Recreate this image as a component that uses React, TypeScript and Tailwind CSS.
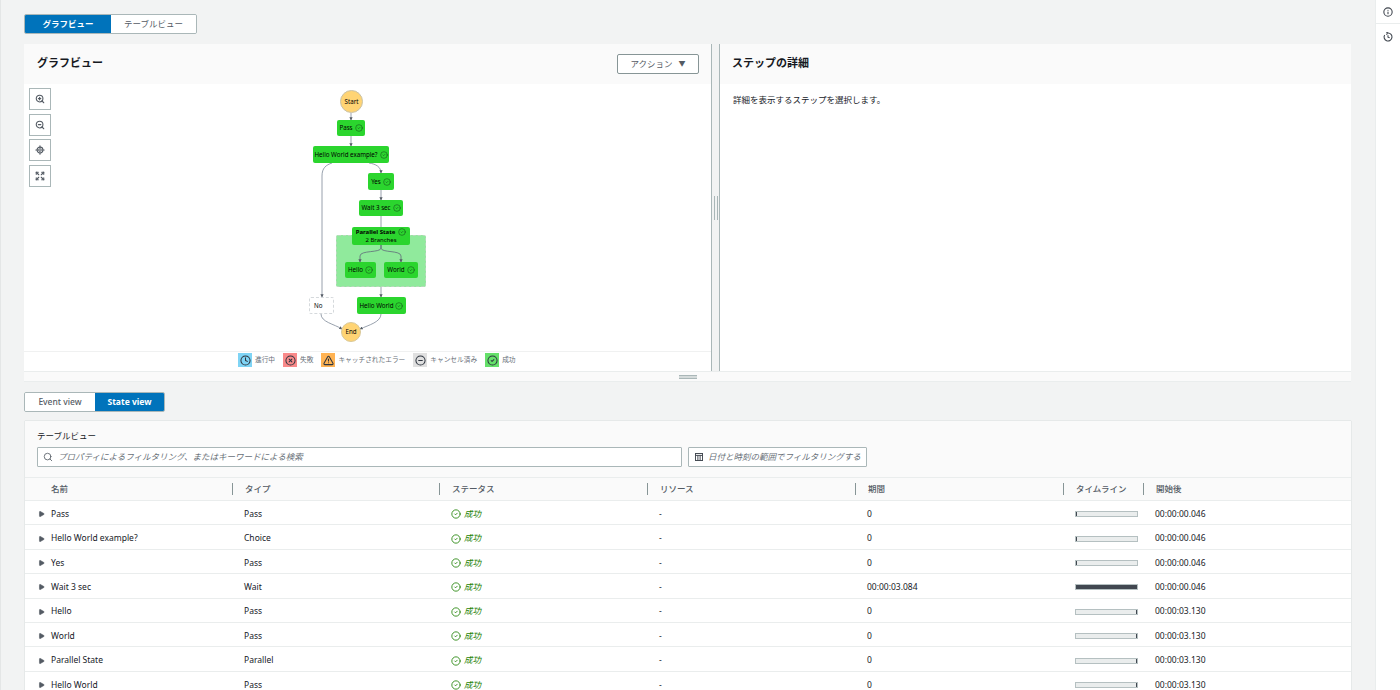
import { CircleCheck, CircleMinus, CircleX, Clock, Expand, Info, LocateFixed, Play, Search, TriangleAlert, ZoomIn, ZoomOut } from 'lucide-react'

const graphNodes = [
  { label: 'Pass', cls: 'left-[313px] top-[36px] w-[28px] h-[16px]' },
  { label: 'Hello World example?', cls: 'left-[289px] top-[62px] w-[76px] h-[17px]' },
  { label: 'Yes', cls: 'left-[344px] top-[89px] w-[26px] h-[17px]' },
  { label: 'Wait 3 sec', cls: 'left-[335px] top-[116px] w-[44px] h-[16px]' },
  { label: 'Hello', cls: 'left-[321px] top-[178px] w-[31px] h-[16px]' },
  { label: 'World', cls: 'left-[360px] top-[178px] w-[34px] h-[16px]' },
  { label: 'Hello World', cls: 'left-[333px] top-[213px] w-[49px] h-[17px]' },
]

const legend = [
  { label: '進行中', icon: Clock, cls: 'bg-[#7fd4f5]' },
  { label: '失敗', icon: CircleX, cls: 'bg-[#f98a8a]' },
  { label: 'キャッチされたエラー', icon: TriangleAlert, cls: 'bg-[#ffb353]' },
  { label: 'キャンセル済み', icon: CircleMinus, cls: 'bg-[#e0e0e0]' },
  { label: '成功', icon: CircleCheck, cls: 'bg-[#65e06a]' },
]

const rows = [
  { name: 'Pass', type: 'Pass', duration: '0', bar: 'start', after: '00:00:00.046' },
  { name: 'Hello World example?', type: 'Choice', duration: '0', bar: 'start', after: '00:00:00.046' },
  { name: 'Yes', type: 'Pass', duration: '0', bar: 'start', after: '00:00:00.046' },
  { name: 'Wait 3 sec', type: 'Wait', duration: '00:00:03.084', bar: 'full', after: '00:00:00.046' },
  { name: 'Hello', type: 'Pass', duration: '0', bar: 'end', after: '00:00:03.130' },
  { name: 'World', type: 'Pass', duration: '0', bar: 'end', after: '00:00:03.130' },
  { name: 'Parallel State', type: 'Parallel', duration: '0', bar: 'end', after: '00:00:03.130' },
  { name: 'Hello World', type: 'Pass', duration: '0', bar: 'end', after: '00:00:03.130' },
]

const columns = ['名前', 'タイプ', 'ステータス', 'リソース', '期間', 'タイムライン', '開始後']
const gridCols = 'grid grid-cols-[207px_207px_208px_208px_208px_80px_208px]'

function GraphEdges() {
  return (
    <svg className="absolute inset-0 h-full w-full" fill="none" stroke="#7d8998" strokeWidth="0.8">
      <defs>
        <marker id="arrow" markerWidth="4" markerHeight="4" refX="3.4" refY="2" orient="auto">
          <path d="M0 0 L4 2 L0 4 Z" fill="#545b64" stroke="none" />
        </marker>
      </defs>
      <path d="M327 29 V36" markerEnd="url(#arrow)" />
      <path d="M327 52 V62" markerEnd="url(#arrow)" />
      <path d="M308 79 C 302 81 298 84 298 92 V213" markerEnd="url(#arrow)" />
      <path d="M345 79 C 352 80 357 83 357 89" markerEnd="url(#arrow)" />
      <path d="M357 106 V116" markerEnd="url(#arrow)" />
      <path d="M357 132 V143" />
      <path d="M357 161 V164 C 357 169 336 166 336 172 V178" stroke="#5f6b7a" markerEnd="url(#arrow)" />
      <path d="M357 161 V164 C 357 169 377 166 377 172 V178" stroke="#5f6b7a" markerEnd="url(#arrow)" />
      <path d="M357 203 V213" markerEnd="url(#arrow)" />
      <path d="M297 230 C 297 238 310 240 318 245" markerEnd="url(#arrow)" />
      <path d="M357 230 C 357 238 345 241 336 245" markerEnd="url(#arrow)" />
    </svg>
  )
}

function GraphCanvas() {
  return (
    <div className="relative flex-1 bg-white">
      {[ZoomIn, ZoomOut, LocateFixed, Expand].map((Icon, i) => (
        <button
          key={i}
          className={`absolute left-[5px] flex h-[22px] w-[22px] items-center justify-center border border-[#aab7b8] bg-white ${
            ['top-[4px]', 'top-[30px]', 'top-[55px]', 'top-[81px]'][i]
          }`}
        >
          <Icon className="h-[10px] w-[10px] text-[#545b64]" strokeWidth={2.6} />
        </button>
      ))}

      <div className="absolute left-[312px] top-[151px] h-[52px] w-[90px] rounded-[2px] border border-dashed border-[#b9d8bd] bg-[#90ea9c]" />
      <GraphEdges />

      <div className="absolute left-[316px] top-[6px] flex h-[23px] w-[23px] items-center justify-center rounded-full border border-[#c9c2a8] bg-[#ffd474] text-[6.2px] text-black">Start</div>
      <div className="absolute left-[317px] top-[238px] flex h-[20px] w-[20px] items-center justify-center rounded-full border border-[#d8c89a] bg-[#ffd474] text-[6.2px] text-black">End</div>

      {graphNodes.map((n) => (
        <div
          key={n.label}
          className={`absolute flex items-center justify-center gap-[2px] whitespace-nowrap rounded-[2px] bg-[#2bd52e] text-[6.2px] text-black ${n.cls}`}
        >
          {n.label}
          <CircleCheck className="h-[8px] w-[8px] shrink-0 text-[#14401a]" strokeWidth={1.5} />
        </div>
      ))}

      <div className="absolute left-[328px] top-[143px] flex h-[18px] w-[58px] flex-col items-center justify-center rounded-[2px] bg-[#2bd52e] text-[6px] leading-[8px] text-black">
        <div className="flex items-center gap-[3px] whitespace-nowrap font-bold">
          Parallel State
          <CircleCheck className="h-[8px] w-[8px] text-[#14401a]" strokeWidth={1.5} />
        </div>
        <div className="whitespace-nowrap">2 Branches</div>
      </div>

      <div className="absolute left-[285px] top-[213px] flex h-[17px] w-[25px] items-center rounded-[2px] border border-dashed border-[#d5d9dc] bg-white pl-[4px] text-[6.2px] text-black">No</div>
    </div>
  )
}

function Legend() {
  return (
    <div className="flex h-[20px] shrink-0 items-start gap-[8px] border-t border-[#f0f1f1] bg-white pl-[214px] pt-px text-[6.7px] text-[#687078]">
      {legend.map(({ label, icon: Icon, cls }) => (
        <div key={label} className="flex items-center gap-[3px]">
          <span className={`flex h-[14px] w-[14px] items-center justify-center ${cls}`}>
            <Icon className="h-[11px] w-[11px] text-[#2f3640]" strokeWidth={2.2} />
          </span>
          {label}
        </div>
      ))}
    </div>
  )
}

function TimelineBar({ kind }: { kind: string }) {
  return (
    <div
      className={`flex h-[6px] w-[63px] border border-[#b5c0c1] bg-[#eaeded] ${
        kind === 'end' ? 'justify-end' : 'justify-start'
      }`}
    >
      <div className={kind === 'full' ? 'w-full bg-[#414750]' : 'w-px bg-[#414750]'} />
    </div>
  )
}

function DateIcon() {
  return (
    <svg viewBox="0 0 10 10" className="h-[8px] w-[8px] shrink-0" fill="none" stroke="#414750" strokeWidth="1.2">
      <rect x="0.6" y="0.6" width="8.8" height="8.8" />
      <path d="M0.6 3 H9.4 M3.6 3 V9.4 M6.4 3 V9.4" />
    </svg>
  )
}

function StateTable() {
  return (
    <div className="ml-px mt-[9px] min-h-0 flex-1 overflow-hidden bg-white shadow-[0_0_1px_#aab7b8]">
      <div className="bg-[#fafafa] px-3 pt-[9px]">
        <div className="text-[8.5px] leading-[12px] text-[#16191f]">テーブルビュー</div>
        <div className="mt-[5px] flex h-[20px] gap-[6px]">
          <div className="flex w-[645px] items-center gap-[5px] rounded-[1px] border border-[#aab7b8] bg-white pl-[5px]">
            <Search className="h-[10px] w-[10px] text-[#545b64]" />
            <input
              readOnly
              placeholder="プロパティによるフィルタリング、またはキーワードによる検索"
              className="flex-1 bg-transparent text-[8.5px] italic outline-none placeholder:text-[#687078]"
            />
          </div>
          <button className="flex w-[179px] items-center gap-[5px] rounded-[1px] border border-[#aab7b8] bg-white pl-[6px] text-[8.5px] italic text-[#687078]">
            <DateIcon />
            日付と時刻の範囲でフィルタリングする
          </button>
        </div>
        <div className="h-[10px]" />
      </div>

      <div className={`${gridCols} h-[24px] items-center border-y border-[#eaeded] bg-[#fafafa] text-[8.5px] font-medium text-[#545b64]`}>
        {columns.map((c, i) => (
          <div key={c} className={i === 0 ? 'pl-[26px]' : 'border-l border-[#879596] pl-3 leading-[12px]'}>
            {c}
          </div>
        ))}
      </div>

      {rows.map((r) => (
        <div key={r.name} className={`${gridCols} h-[24.4px] items-center border-b border-[#eaeded] pt-[3px] text-[8.5px] text-[#16191f]`}>
          <div className="relative pl-[26px]">
            <Play className="absolute left-[13px] top-1/2 h-[7px] w-[7px] -translate-y-1/2 fill-[#545b64] text-[#545b64]" />
            {r.name}
          </div>
          <div className="pl-3">{r.type}</div>
          <div className="flex items-center gap-[3px] pl-3 italic text-[#1d8102]">
            <CircleCheck className="h-[10px] w-[10px]" />
            成功
          </div>
          <div className="pl-3">-</div>
          <div className="pl-3">{r.duration}</div>
          <div className="pl-3">
            <TimelineBar kind={r.bar} />
          </div>
          <div className="pl-3">{r.after}</div>
        </div>
      ))}
    </div>
  )
}

export default function App() {
  return (
    <div className="flex h-[690px] w-[1400px] overflow-hidden bg-[#f2f3f3] font-['Noto_Sans','Noto_Sans_CJK_JP',sans-serif]">
      <div className="w-px bg-[#e4e6e6]" />
      <main className="flex w-[1374px] flex-col pl-[23px] pr-[24px] pt-[14px]">
        <div className="flex h-[20px] w-[173px] shrink-0 overflow-hidden rounded-[2px] border border-[#aab7b8] text-[8.5px]">
          <div className="flex w-[86px] items-center justify-center bg-[#0073bb] font-bold text-white">グラフビュー</div>
          <div className="flex flex-1 items-center justify-center bg-white text-[#545b64]">テーブルビュー</div>
        </div>

        <section className="mt-[10px] flex h-[338px] shrink-0 flex-col bg-[#fafafa]">
          <div className="flex min-h-0 flex-1">
            <div className="flex w-[687px] flex-col">
              <div className="flex h-[40px] shrink-0 items-center justify-between bg-[#fafafa] pl-[13px] pr-[12px]">
                <h2 className="mb-[2px] text-[11px] font-bold text-[#16191f]">グラフビュー</h2>
                <button className="flex h-[20px] w-[82px] items-center justify-center gap-[6px] rounded-[2px] border border-[#879596] bg-white text-[8.5px] text-[#545b64]">
                  アクション
                  <span className="text-[7px]">▼</span>
                </button>
              </div>
              <GraphCanvas />
              <Legend />
            </div>

            <div className="flex w-[9px] items-center justify-center border-x border-[#aab7b8] bg-[#f2f3f3]">
              <div className="h-[24px] w-[4px] border-x border-[#aab7b8]" />
            </div>

            <div className="flex flex-1 flex-col">
              <div className="flex h-[40px] shrink-0 items-center bg-[#fafafa] pl-[12px]">
                <h2 className="mb-[2px] text-[11px] font-bold text-[#16191f]">ステップの詳細</h2>
              </div>
              <div className="flex-1 bg-white pl-[13px] pt-[10px] text-[8.5px] leading-[12px] text-[#16191f]">
                詳細を表示するステップを選択します。
              </div>
            </div>
          </div>
          <div className="flex h-[11px] shrink-0 items-center justify-center border-y border-[#eaeded] bg-[#fafafa]">
            <div className="h-[4px] w-[18px] border-y border-[#aab7b8] bg-[#d5dbdb]" />
          </div>
        </section>

        <div className="mt-[10px] flex h-[20px] w-[141px] shrink-0 overflow-hidden rounded-[2px] border border-[#aab7b8] text-[8.5px]">
          <div className="flex w-[70px] items-center justify-center bg-white font-medium text-[#545b64]">Event view</div>
          <div className="flex flex-1 items-center justify-center bg-[#0073bb] font-bold text-white">State view</div>
        </div>

        <StateTable />
      </main>

      <aside className="flex w-[25px] flex-col items-center border-l border-[#eaeded] bg-white">
        <div className="flex h-[24px] w-full items-center justify-center border-b border-[#eaeded]">
          <Info className="h-[10px] w-[10px] text-[#414750]" strokeWidth={2.6} />
        </div>
        <div className="flex h-[25px] items-center justify-center">
          <svg viewBox="0 0 24 24" className="h-[10px] w-[10px]" fill="none" stroke="#414750" strokeWidth="2.6">
            <path d="M12 2.5 A9.5 9.5 0 1 1 4 7" />
            <path d="M12 2.5 L8 6 M12 2.5 L8 0" />
            <path d="M12 8 V12.5 L16 14" />
          </svg>
        </div>
      </aside>
    </div>
  )
}
